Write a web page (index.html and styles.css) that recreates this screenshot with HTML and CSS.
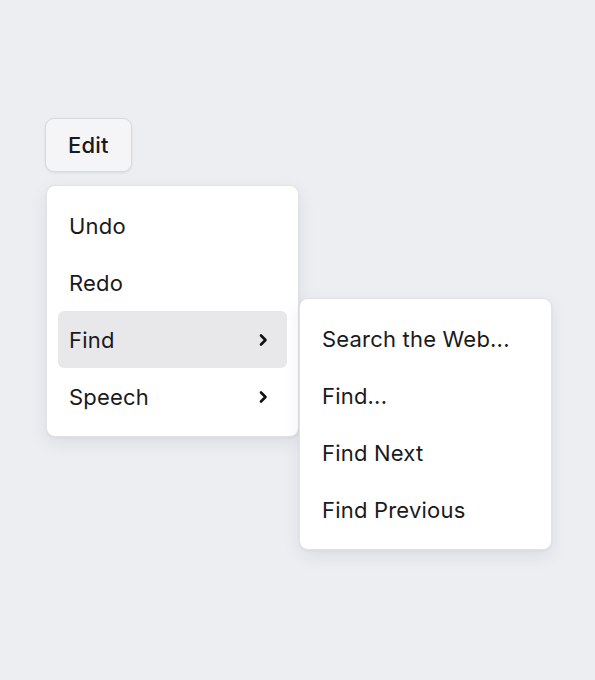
FILE: index.html
```html
<!DOCTYPE html>
<html lang="en">
<head>
  <meta charset="UTF-8">
  <meta name="viewport" content="width=device-width, initial-scale=1.0">
  <title>Edit Menu</title>
  <link rel="stylesheet" href="styles.css">
</head>
<body>
  <div class="menubar">
    <!-- Trigger -->
    <button class="trigger">Edit</button>

    <!-- Edit menu -->
    <div class="menu">
      <div class="item">Undo</div>
      <div class="item">Redo</div>
      <div class="item has-sub open">
        <span>Find</span>
        <svg class="chevron" viewBox="0 0 10 14" width="10" height="14"><path d="M3 2.5 L7.5 7 L3 11.5"/></svg>

        <!-- Find submenu -->
        <div class="menu submenu">
          <div class="item">Search the Web...</div>
          <div class="item">Find...</div>
          <div class="item">Find Next</div>
          <div class="item">Find Previous</div>
        </div>
      </div>
      <div class="item has-sub">
        <span>Speech</span>
        <svg class="chevron" viewBox="0 0 10 14" width="10" height="14"><path d="M3 2.5 L7.5 7 L3 11.5"/></svg>
      </div>
    </div>
  </div>
</body>
</html>
```

FILE: styles.css
```css
/* Page */
body {
  margin: 0;
  font-family: Inter, 'Noto Sans', sans-serif;
  color: #1a1a1c;
  background: #eceef2;
  min-height: 100vh;
}

.menubar {
  display: flex;
  flex-direction: column;
  align-items: flex-start;
  gap: 13px;
  padding: 118px 0 0 45px;
}

/* Trigger button */
.trigger {
  font-family: inherit;
  font-size: 22px;
  font-weight: 500;
  letter-spacing: 0.2px;
  color: #1a1a1c;
  background: #f5f5f7;
  border: 1px solid #d9dade;
  border-radius: 9px;
  height: 54px;
  padding: 0 22px;
  box-shadow: 0 1px 3px rgba(0,0,0,0.08);
  cursor: pointer;
}

/* Menus */
.menu {
  width: 229px;
  margin-left: 1px;
  padding: 11px;
  background: #ffffff;
  border: 1px solid #e2e3e7;
  border-radius: 9px;
  box-shadow: 0 6px 18px rgba(30,35,50,0.08), 0 1px 3px rgba(0,0,0,0.05);
}

.item {
  position: relative;
  display: flex;
  align-items: center;
  justify-content: space-between;
  height: 57px;
  padding: 0 19px 0 11px;
  border-radius: 6px;
  font-size: 22px;
  letter-spacing: 0.2px;
  cursor: default;
}

.item.open {
  background: #e8e8ea;
}

.chevron {
  fill: none;
  stroke: #111;
  stroke-width: 2.6;
  stroke-linecap: round;
  stroke-linejoin: round;
}

.submenu {
  position: absolute;
  top: -13px;
  left: 240px;
  z-index: 10;
}
```
